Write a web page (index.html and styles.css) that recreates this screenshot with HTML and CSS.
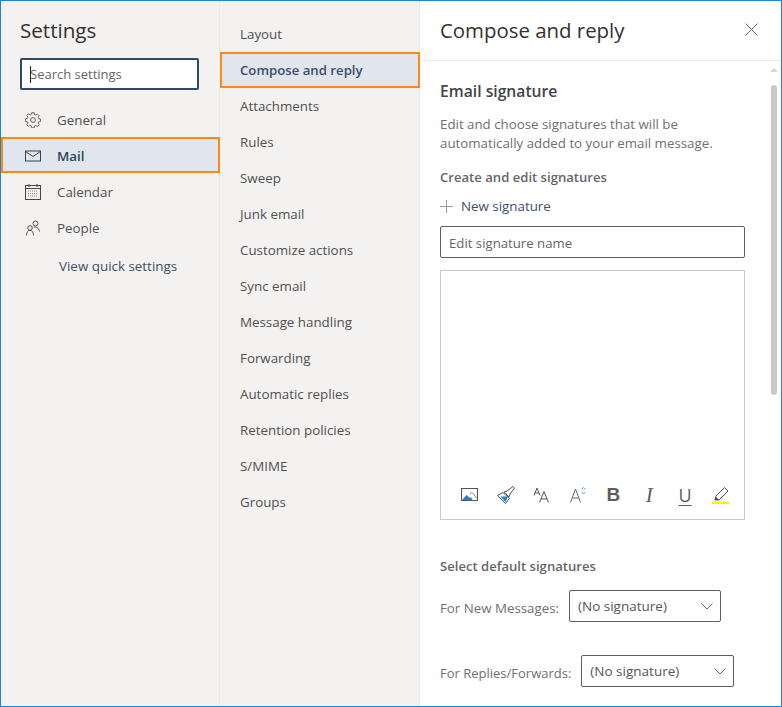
FILE: index.html
```html
<!DOCTYPE html>
<html lang="en">
<head>
    <meta charset="UTF-8">
    <title>Settings</title>
    <link rel="stylesheet" href="styles.css">
</head>
<body>
    <div class="window">
        <div class="nav">
            <h1 class="nav-title">Settings</h1>
            <div class="search"><span class="caret"></span><span>Search settings</span></div>
            <div class="nav-list">
                <div class="nav-item">
                    <svg class="nav-icon" viewBox="0 0 16 16" fill="none" stroke="#555" stroke-width="0.9"><circle cx="8" cy="8" r="2.4"/><path d="M6.8 .7h2.4l.4 2 1.2.5 1.7-1.1 1.7 1.7-1.1 1.7.5 1.2 2 .4v2.400l-2 .4-.5 1.200 1.100 1.700-1.700 1.700-1.700-1.100-1.200.5-.4 2H6.800l-.4-2-1.200-.5-1.700 1.100-1.700-1.700 1.100-1.700-.5-1.200-2-.4V6.800l2-.4.5-1.200-1.100-1.700 1.700-1.700 1.700 1.100 1.200-.5z"/></svg>
                    <span>General</span>
                </div>
                <div class="nav-item selected">
                    <svg class="nav-icon" viewBox="0 0 16 16" fill="none" stroke="#2f4560" stroke-width="1"><rect x=".5" y="3" width="15" height="10"/><path d="M.5 3.500 8 8.500l7.500-5"/></svg>
                    <span>Mail</span>
                </div>
                <div class="nav-item">
                    <svg class="nav-icon" viewBox="0 0 16 16" fill="none" stroke="#444" stroke-width="1"><rect x=".5" y="1.500" width="15" height="14"/><path d="M.5 4.500h15M4 0v3M12 0v3"/><path d="M3 7h10M3 9.500h10M3 12h10" stroke-dasharray="1 1" stroke="#888"/></svg>
                    <span>Calendar</span>
                </div>
                <div class="nav-item">
                    <svg class="nav-icon" viewBox="0 0 16 16" fill="none" stroke="#444" stroke-width="0.9"><circle cx="10.500" cy="3.500" r="2.500"/><circle cx="5" cy="8" r="2.300"/><path d="M1.500 15.500c0-3 1.200-5.200 3.500-5.200s3.200 2 3.600 5.200M8.500 7c2.800-.5 5.500 1 6 4.500"/></svg>
                    <span>People</span>
                </div>
            </div>
            <div class="quick-link">View quick settings</div>
        </div>

        <div class="sections">
            <div class="section-item">Layout</div>
            <div class="section-item selected">Compose and reply</div>
            <div class="section-item">Attachments</div>
            <div class="section-item">Rules</div>
            <div class="section-item">Sweep</div>
            <div class="section-item">Junk email</div>
            <div class="section-item">Customize actions</div>
            <div class="section-item">Sync email</div>
            <div class="section-item">Message handling</div>
            <div class="section-item">Forwarding</div>
            <div class="section-item">Automatic replies</div>
            <div class="section-item">Retention policies</div>
            <div class="section-item">S/MIME</div>
            <div class="section-item">Groups</div>
        </div>

        <div class="pane">
            <div class="pane-header">
                <h2 class="pane-title">Compose and reply</h2>
                <svg class="close" viewBox="0 0 13 13" fill="none" stroke="#555" stroke-width="0.9"><path d="M.5 .5l12 12M12.500 .5l-12 12"/></svg>
            </div>
            <div class="pane-body">
                <h3 class="sig-title">Email signature</h3>
                <p class="sig-desc">Edit and choose signatures that will be automatically added to your email message.</p>
                <div class="label create-label">Create and edit signatures</div>
                <div class="new-sig">
                    <svg class="plus" viewBox="0 0 13 13" fill="none" stroke="#999" stroke-width="1"><path d="M6.500 0v13M0 6.500h13"/></svg>
                    <span>New signature</span>
                </div>
                <div class="name-input">Edit signature name</div>
                <div class="editor">
                    <div class="toolbar">
                        <svg class="tool" viewBox="0 0 18 18"><rect x=".5" y="2.500" width="16" height="12" fill="#fff" stroke="#555"/><path d="M1 14l4.500-5 3.500 3 1-1 1.500 3z" fill="#2b7cd3"/><path d="M9 8l2-1.500 5.500 6.500" stroke="#888" fill="none"/></svg>
                        <svg class="tool" viewBox="0 0 18 18" fill="none"><path d="M.5 9.500 6 6.500l6.500 6-4 5z" fill="#fff" stroke="#555"/><path d="M3.500 10.500h7.500L8.500 16z" fill="#2b7cd3"/><path d="M7 6l3-1 6-4.500 1.500 1.500-4.500 6-1 3z" stroke="#555"/></svg>
                        <svg class="tool" viewBox="0 0 18 18" fill="none" stroke="#555" stroke-width="1"><path d="M1 9.500 4 2l3 7.500M2 7h4"/><path d="M6.500 16.500 11 5.500l4.500 11M8 13h6"/></svg>
                        <svg class="tool" viewBox="0 0 18 18" fill="none" stroke="#666" stroke-width="1"><path d="M1.500 16.500 6.500 3l5 13.500M3.200 12h6.600"/><path d="M12.500 3.500l2-2 2 2M12.500 6l2 2 2-2" stroke="#5a9be0"/></svg>
                        <span class="tool tool-bold">B</span>
                        <span class="tool tool-italic">I</span>
                        <span class="tool tool-under">U</span>
                        <svg class="tool" viewBox="0 0 18 18" fill="none"><path d="M3.500 10.500 12.500 1.500l3.500 3.500-9 9H3z" stroke="#555"/><path d="M2.500 14l1.500-3.500 3 3.500z" fill="#555"/><rect x="0" y="15.500" width="17" height="2.500" fill="#fff200"/></svg>
                    </div>
                </div>
                <div class="label default-label">Select default signatures</div>
                <div class="sig-row">
                    <span class="sig-row-label">For New Messages:</span>
                    <div class="select">
                        <span>(No signature)</span>
                        <svg class="chevron" viewBox="0 0 12 7" fill="none" stroke="#666" stroke-width="1"><path d="M.5 .5 6 6 11.500 .5"/></svg>
                    </div>
                </div>
                <div class="sig-row reply-row">
                    <span class="sig-row-label">For Replies/Forwards:</span>
                    <div class="select select-wide">
                        <span>(No signature)</span>
                        <svg class="chevron" viewBox="0 0 12 7" fill="none" stroke="#666" stroke-width="1"><path d="M.5 .5 6 6 11.500 .5"/></svg>
                    </div>
                </div>
            </div>
            <div class="scroll-arrow"></div>
            <div class="scroll-thumb"></div>
        </div>
    </div>
</body>
</html>
```

FILE: styles.css
```css
html, body {
    margin: 0;
    padding: 0;
    width: 100%;
    height: 100%;
    background-color: white;
    font-family: 'Open Sans', 'Noto Sans', Arial, sans-serif;
    overflow: hidden;
}

.window {
    display: flex;
    width: 782px;
    height: 707px;
    box-sizing: border-box;
    border: 1px solid #1a86d9;
    overflow: hidden;
}

.nav {
    width: 219px;
    flex-shrink: 0;
    box-sizing: border-box;
    background-color: #f3f2f1;
    border-right: 1px solid #eaeaea;
}

.nav-title {
    margin: 14px 0 0 19px;
    font-size: 20.6px;
    line-height: 30px;
    font-weight: 400;
    color: #323130;
}

.search {
    display: flex;
    align-items: center;
    box-sizing: border-box;
    width: 179px;
    height: 32px;
    margin: 13px 0 0 19px;
    padding-left: 8px;
    background-color: white;
    border: 2px solid #2f4a66;
    border-radius: 2px;
    font-size: 13px;
    color: #666;
}

.caret {
    width: 1px;
    height: 17px;
    margin-right: -1px;
    background-color: #222;
}

.nav-list {
    margin-top: 12px;
}

.nav-item {
    display: flex;
    align-items: center;
    height: 36px;
    box-sizing: border-box;
    padding-left: 24px;
    font-size: 13.35px;
    color: #505050;
}

.nav-item.selected {
    position: relative;
    margin: -1px -1px 1px 0;
    padding: 1px 0 0 22px;
    background-color: #e1e5ed;
    border: 2px solid #ff8a0f;
    color: #2f4560;
    font-weight: 600;
}

.nav-icon {
    width: 16px;
    height: 16px;
    margin-right: 16px;
    flex-shrink: 0;
}

.quick-link {
    margin: 10px 0 0 58px;
    font-size: 13.4px;
    line-height: 20px;
    color: #3c5068;
}

.sections {
    width: 200px;
    flex-shrink: 0;
    box-sizing: border-box;
    padding-top: 15px;
    background-color: #f3f2f1;
    border-right: 1px solid #eaeaea;
}

.section-item {
    display: flex;
    align-items: center;
    height: 36px;
    box-sizing: border-box;
    padding-left: 20px;
    font-size: 13.35px;
    color: #505050;
}

.section-item.selected {
    margin-right: -1px;
    padding-left: 18px;
    background-color: #e1e5ed;
    border: 2px solid #ff8a0f;
    color: #3a4f66;
    font-size: 13.2px;
    font-weight: 600;
}

.pane {
    position: relative;
    flex: 1;
    min-width: 0;
}

.pane-header {
    display: flex;
    align-items: center;
    justify-content: space-between;
    height: 60px;
    box-sizing: border-box;
    padding: 0 23px 0 20px;
    border-bottom: 1px solid #eaeaea;
}

.pane-title {
    margin: 0 0 1px;
    font-size: 20.4px;
    font-weight: 400;
    color: #323130;
}

.close {
    width: 13px;
    height: 13px;
    margin-bottom: 2px;
}

.pane-body {
    padding: 18px 0 0 20px;
}

.sig-title {
    margin: 0;
    font-size: 15.7px;
    line-height: 24px;
    font-weight: 600;
    color: #444;
}

.sig-desc {
    width: 295px;
    margin: 12px 0 0;
    font-size: 13.3px;
    line-height: 19px;
    color: #6f6f6f;
}

.label {
    font-size: 13.1px;
    line-height: 20px;
    font-weight: 600;
    color: #666;
}

.create-label {
    margin-top: 14px;
}

.new-sig {
    display: flex;
    align-items: center;
    height: 20px;
    margin-top: 9px;
    font-size: 13.35px;
    color: #3c5068;
}

.plus {
    width: 13px;
    height: 13px;
    margin-right: 8px;
}

.name-input {
    display: flex;
    align-items: center;
    box-sizing: border-box;
    width: 305px;
    height: 32px;
    margin-top: 10px;
    padding: 1px 0 0 8px;
    border: 1px solid #605e5c;
    border-radius: 2px;
    font-size: 13.2px;
    color: #666;
}

.editor {
    display: flex;
    flex-direction: column;
    justify-content: flex-end;
    box-sizing: border-box;
    width: 305px;
    height: 250px;
    margin-top: 12px;
    border: 1px solid #c8c8c8;
}

.toolbar {
    display: flex;
    align-items: center;
    justify-content: space-between;
    height: 18px;
    padding: 0 14px 15px 20px;
}

.tool {
    width: 18px;
    height: 18px;
    text-align: center;
    line-height: 18px;
    color: #605e5c;
}

.tool-bold {
    font-family: 'Liberation Sans', Arial, sans-serif;
    font-size: 19px;
    font-weight: 700;
}

.tool-italic {
    font-family: 'Liberation Serif', serif;
    font-size: 21px;
    font-style: italic;
}

.tool-under {
    font-size: 18px;
    text-decoration: underline;
    text-decoration-thickness: 1px;
    text-underline-offset: 3px;
}

.default-label {
    margin-top: 36px;
}

.sig-row {
    display: flex;
    align-items: flex-start;
    margin-top: 14px;
    font-size: 13.3px;
    color: #6f6f6f;
}

.reply-row {
    margin-top: 33px;
    font-size: 13px;
}

.sig-row-label {
    margin: 8px 10px 0 0;
    line-height: 20px;
}

.select {
    display: flex;
    align-items: center;
    justify-content: space-between;
    box-sizing: border-box;
    width: 152px;
    height: 32px;
    padding: 0 7px 0 8px;
    border: 1px solid #605e5c;
    border-radius: 2px;
    font-size: 13.5px;
    color: #555;
}

.select-wide {
    width: 153px;
}

.chevron {
    width: 12px;
    height: 7px;
}

.scroll-arrow {
    position: absolute;
    top: 67px;
    left: 350px;
    border-left: 4px solid transparent;
    border-right: 4px solid transparent;
    border-bottom: 4px solid #d6d6d6;
}

.scroll-thumb {
    position: absolute;
    top: 84px;
    left: 351px;
    width: 6px;
    height: 310px;
    border-radius: 3px;
    background-color: #c8c8c8;
}
```
